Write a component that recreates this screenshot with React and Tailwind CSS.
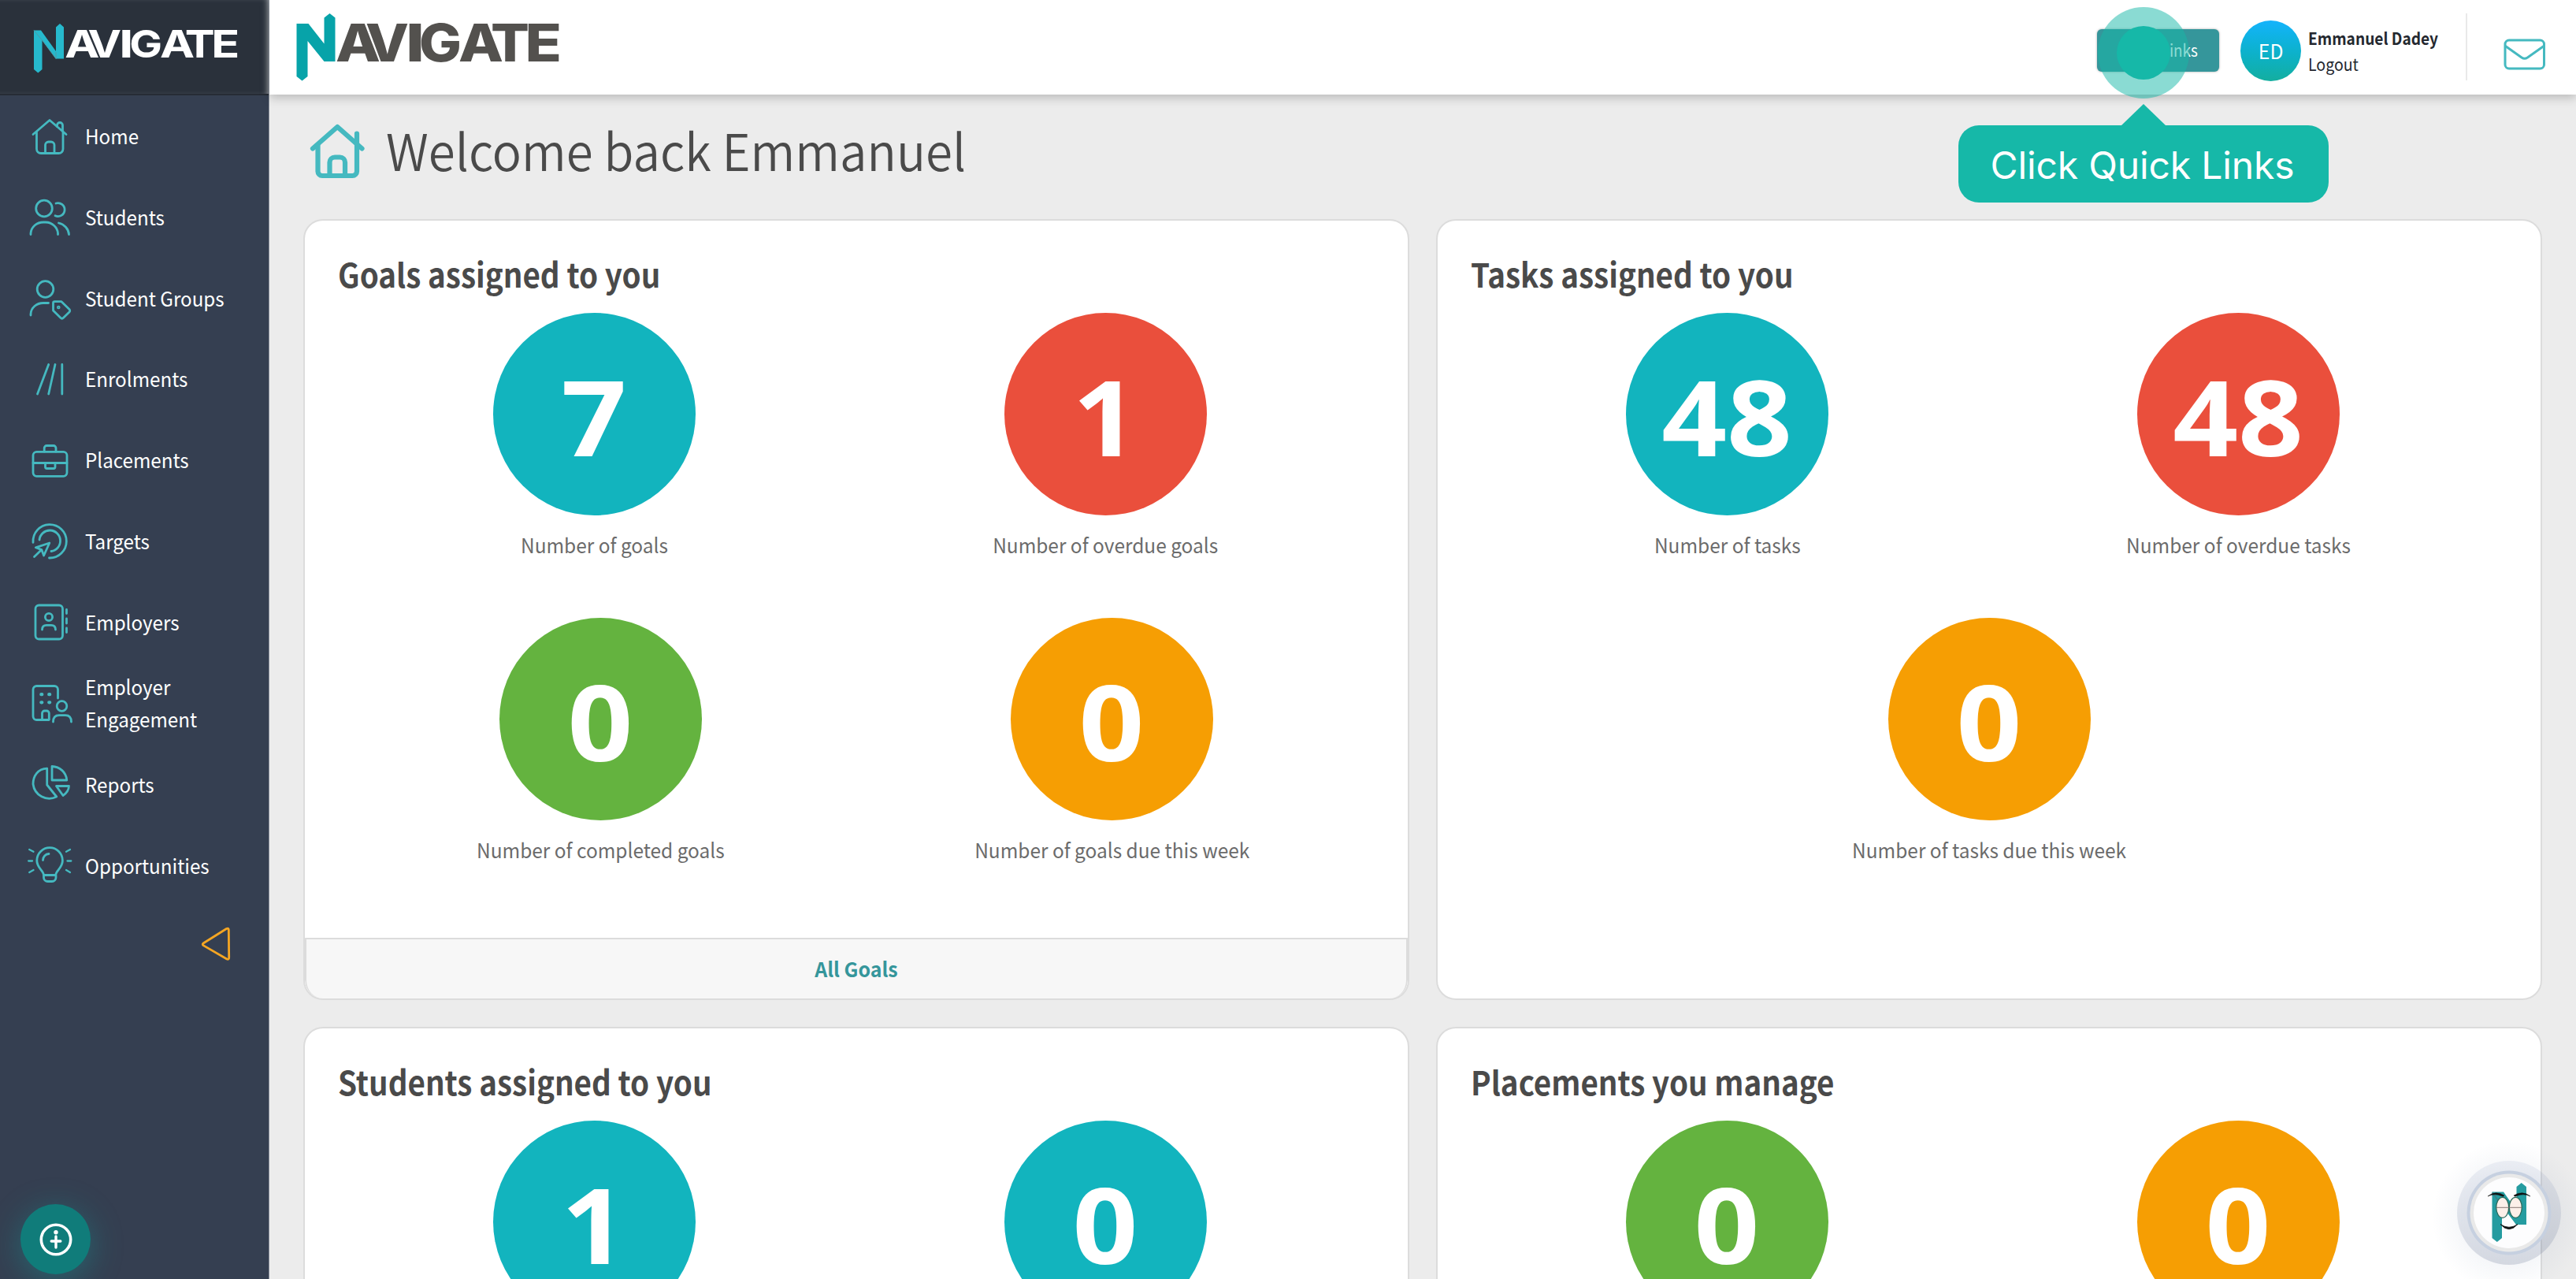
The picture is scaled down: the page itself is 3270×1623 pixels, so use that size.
const TEAL = "#45b9c0";

const iconProps = {
  viewBox: "0 0 60 60",
  fill: "none",
  stroke: TEAL,
  strokeWidth: 2.8,
  strokeLinecap: "round",
  strokeLinejoin: "round",
};

/* Sidebar icons, each drawn on a 60 x 60 grid */
const icons = {
  home: (
    <>
      <path d="M9 26.5 L30 8.5 L51 26.5" />
      <path d="M13.5 23.5 V45 a5.5 5.5 0 0 0 5.5 5.5 H41.5 a5.5 5.5 0 0 0 5.5 -5.5 V23.5" />
      <path d="M24.5 50 V40 a4 4 0 0 1 4 -4 H32 a4 4 0 0 1 4 4 V50" />
      <path d="M39.5 16.5 V15 a3.5 3.5 0 0 1 3.5 -3.5 a3.5 3.5 0 0 1 3.5 3.5 V22" />
    </>
  ),
  students: (
    <>
      <circle cx="23" cy="17.5" r="10.3" />
      <path d="M6 50.5 V49 A16 15 0 0 1 22 35 H25 A16 15 0 0 1 40.5 49 V50.5" />
      <path d="M38 11 A8.5 8.5 0 1 1 37 26.8" />
      <path d="M41.5 36 A17 16 0 0 1 54.5 50.5" />
    </>
  ),
  groups: (
    <>
      <circle cx="24.5" cy="17" r="10.3" />
      <path d="M6 50 V48.5 A16 14.5 0 0 1 22 34.5 H28.5" />
      <path d="M34.5 34.5 a1.8 1.8 0 0 1 1.8 -1.8 H45 L55 42.5 a2.4 2.4 0 0 1 0 3.4 L47.5 53.3 a2.6 2.6 0 0 1 -3.6 0 L34.5 44 Z" />
      <circle cx="41.3" cy="40" r="0.9" />
    </>
  ),
  enrolments: <path d="M28.7 9.5 L14.5 47 M37 9.5 L28.7 47 M45.8 9.5 V47" />,
  placements: (
    <>
      <rect x="9" y="17.3" width="43" height="31" rx="4.5" />
      <path d="M23.2 17 V12.5 a3 3 0 0 1 3 -3 H35 a3 3 0 0 1 3 3 V17 M9 31.5 H52" />
      <path d="M24.5 32 V36.5 a2 2 0 0 0 2 2 H35 a2 2 0 0 0 2 -2 V32" />
    </>
  ),
  targets: (
    <>
      <path d="M9 29.3 A21.2 21.2 0 1 1 29.5 49" />
      <path d="M17 26 A13.3 13.3 0 1 1 32 40.5" />
      <path d="M29.8 30 L12.3 35.8 L19.8 38.6 L22.6 46 Z M19.8 38.6 L10.5 47.5" />
    </>
  ),
  employers: (
    <>
      <rect x="12" y="7" width="34.5" height="43" rx="4.5" />
      <circle cx="29" cy="22" r="4.6" />
      <path d="M20.5 38 C20.5 33.5 23 32.3 26 32.3 H32 C35 32.3 37.5 33.5 37.5 38" />
      <path d="M51.5 12.5 V17.5 M51.5 24 V30 M51.5 36 V41.5" />
    </>
  ),
  engagement: (
    <>
      <path d="M29 49.5 H13.5 a4.5 4.5 0 0 1 -4.5 -4.5 V11 a4.5 4.5 0 0 1 4.5 -4.5 H36 a4.5 4.5 0 0 1 4.5 4.5 V22" />
      <path d="M20.5 49 V41 a3 3 0 0 1 3 -3 H26.3 a3 3 0 0 1 3 3 V49" />
      <path d="M19.3 17.2 h1 M29.2 17.2 h1 M19.3 27.3 h1 M29.2 27.3 h1" strokeWidth="4.2" />
      <circle cx="45.5" cy="32" r="6.3" />
      <path d="M34.5 52 C34.5 46 37.5 43.7 42 43.7 H50 C54.5 43.7 57.5 46 57.5 52" />
    </>
  ),
  reports: (
    <>
      <path d="M26.7 8.2 C15 8.5 9 18 9 28 A20.7 20.7 0 0 0 38.8 44 L26.7 29 Z" />
      <path d="M33 5.5 C43 5.8 51 13 51.8 23 H33 Z" />
      <path d="M38.5 30.5 H54.5 C54.3 35 51.5 39.5 47 42.5 Z" />
    </>
  ),
  opportunities: (
    <>
      <path d="M22.5 40.5 C22 34 13.8 31.5 13.8 22 A16.3 16.3 0 0 1 46.4 22 C46.4 31.5 38.2 34 37.7 40.5 Z" />
      <path d="M22.5 41 V43.5 a5 5 0 0 0 5 5 H33 a5 5 0 0 0 5 -5 V41" />
      <path d="M21.5 21.5 A8 8 0 0 1 29 13.5" />
      <path d="M3.2 22.5 H8 M4.2 8 L9.5 10.8 M4.2 37 L9.5 34 M52.5 22.5 H57.3 M56 8 L51 10.8 M56 37 L51 34" strokeWidth="2.3" />
    </>
  ),
};

const nav = [
  ["home", "Home"],
  ["students", "Students"],
  ["groups", "Student Groups"],
  ["enrolments", "Enrolments"],
  ["placements", "Placements"],
  ["targets", "Targets"],
  ["employers", "Employers"],
  ["engagement", "Employer Engagement"],
  ["reports", "Reports"],
  ["opportunities", "Opportunities"],
];

/* Wordmark letters with hand-set kerning: [letter, x, advance] */
const letters = [
  ["A", 426, 57],
  ["V", 464, 55],
  ["I", 515, 24],
  ["G", 532, 54],
  ["A", 582, 57],
  ["T", 623, 49],
  ["E", 666.5, 46.5],
];

function Wordmark({ color, weight, stroke }) {
  return (
    <g fill={color} stroke={color} strokeWidth={stroke} fontFamily="Inter" fontWeight={weight} fontSize="66">
      {letters.map(([ch, x, w]) => (
        <text key={x} x={x} y="78" textLength={w} lengthAdjust="spacingAndGlyphs">{ch}</text>
      ))}
    </g>
  );
}

function Sidebar() {
  return (
    <aside className="flex h-full w-[342px] shrink-0 flex-col border-r border-[#8a919c] bg-[#353f51]">
      <div className="h-[121px] shrink-0 border-b-2 border-[#262c35] bg-[#2a313b] shadow-[inset_-6px_0_8px_-6px_#c9ccd0]">
        <svg viewBox="0 0 342 120" className="h-[120px] w-[342px]">
          <path d="M43 38.5 H52 L71 65 V34.5 L76 30 L81 34.5 V74.5 H71 L53.5 51 V88 L48.3 92.5 L43 88 Z" fill="#26b9cd" />
          <path d="M43 38.5 L53.5 51 L71 74.5 V66" fill="none" stroke="#4f9aa5" strokeWidth="1" />
          <g transform="translate(-247.5 16.4) scale(0.774 0.732)">
            <Wordmark color="#fff" weight="700" stroke="0" />
          </g>
        </svg>
      </div>
      <nav className="mt-0.5 flex flex-col">
        {nav.map(([icon, label]) => (
          <a key={icon} className="flex h-[102.85px] items-center pl-[32.5px]">
            <svg {...iconProps} className="h-[60px] w-[60px] shrink-0">{icons[icon]}</svg>
            <span className="ml-[15px] w-[205px] origin-left scale-x-[0.93] pr-2 pb-1.5 text-[26px] leading-[41px] text-white">
              {label}
            </span>
          </a>
        ))}
      </nav>
      <svg viewBox="0 0 40 46" className="mt-[24px] ml-[254px] h-[46px] w-[40px]" fill="none" stroke="#f5a623" strokeWidth="2.8" strokeLinejoin="round">
        <path d="M4 22 Q2.5 23.3 4 24.6 L34 42 Q36.7 43 36.7 40 L36.3 5 Q36.3 2.2 33.5 3.5 Z" />
      </svg>
    </aside>
  );
}

function Header() {
  return (
    <header className="relative z-10 flex h-[120px] w-full shrink-0 items-center bg-white pt-2 shadow-[0_4px_12px_rgba(0,0,0,0.22)]">
      <svg viewBox="342 0 400 120" className="-mt-2 h-[120px] w-[400px]">
        <path d="M376.5 30 H391.5 L411.5 55.5 V22.5 L418.5 17 L425.5 22.5 V78 H411.5 L390.5 52 V97 L383.5 102.5 L376.5 97 Z" fill="#07a3a9" />
        <Wordmark color="#53514e" weight="800" stroke="0" />
      </svg>
      <div className="ml-auto flex h-[54px] w-[155px] items-center justify-center rounded-md bg-[#35969b] shadow-[0_0_3px_rgba(0,0,0,0.35)]">
        <span className="origin-center scale-x-[0.9] pb-0.5 text-[21px] leading-none whitespace-nowrap text-white">Quick Links</span>
      </div>
      <div className="ml-[27px] flex h-[77px] w-[77px] items-center justify-center rounded-full bg-gradient-to-b from-[#15b3fc] to-[#14ae9f]">
        <span className="scale-x-[0.95] text-[26px] leading-none text-white">ED</span>
      </div>
      <div className="ml-[9px] w-[200px] text-[#24282f]">
        <div className="origin-left scale-x-[0.91] text-[21px] leading-[34px] font-bold whitespace-nowrap">Emmanuel Dadey</div>
        <div className="origin-left scale-x-[0.93] text-[21px] leading-[32px]">Logout</div>
      </div>
      <div className="mt-[-9px] h-[85px] w-[2px] bg-[#e9e9e9]" />
      <svg viewBox="0 0 54 42" className="mt-[10px] mr-[38px] ml-[46px] h-[42px] w-[54px]" fill="none" stroke={TEAL} strokeWidth="3" strokeLinejoin="round">
        <rect x="2" y="3" width="49.5" height="36" rx="5" />
        <path d="M2.5 10.5 L23 25 Q26.7 27.5 30.5 25 L51 10.5" />
      </svg>
    </header>
  );
}

function Stat({ value, label, color }) {
  return (
    <div className="flex w-[649px] flex-col items-center">
      <div className={`flex h-[257px] w-[257px] items-start justify-center rounded-full ${color}`}>
        <span className="scale-x-[1.09] font-['Open_Sans'] text-[133px] leading-[261px] font-bold text-white">{value}</span>
      </div>
      {label && (
        <div className="mt-[14px] scale-x-[0.94] text-[26px] leading-[46px] whitespace-nowrap text-[#6b6b6b]">{label}</div>
      )}
    </div>
  );
}

const CYAN = "bg-[#12b4be]";
const RED = "bg-[#ea4f3c]";
const GREEN = "bg-[#64b33f]";
const AMBER = "bg-[#f69e03]";

function Card({ title, first, second, footer }) {
  return (
    <section className="flex h-[991px] flex-col overflow-hidden rounded-[25px] border-2 border-[#dcdcdc] bg-white">
      <h2 className="mt-[42px] ml-[42px] origin-left scale-x-[0.918] text-[42px] leading-[50px] font-bold whitespace-nowrap text-[#4a4a4a]">
        {title}
      </h2>
      <div className="mt-[25px] ml-[43px] flex">
        {first.map((s, i) => <Stat key={i} {...s} />)}
      </div>
      {second && (
        <div className="mt-[70px] ml-[51px] flex w-[1298px] justify-center">
          {second.map((s, i) => <Stat key={i} {...s} />)}
        </div>
      )}
      {footer && (
        <div className="mt-auto flex h-[77px] items-center justify-center rounded-b-[23px] border-x-2 border-t-2 border-[#dcdcdc] bg-[#f7f7f7]">
          <span className="scale-x-[0.96] pb-0.5 text-[26px] leading-none font-bold text-[#35969b]">{footer}</span>
        </div>
      )}
    </section>
  );
}

function Mascot() {
  return (
    <svg viewBox="0 0 200 183" className="absolute right-0 bottom-0 z-20 h-[183px] w-[200px]">
      <defs>
        <radialGradient id="haze">
          <stop offset="0.6" stopColor="#3c5a8c" stopOpacity="0.05" />
          <stop offset="1" stopColor="#3c5a8c" stopOpacity="0" />
        </radialGradient>
        <linearGradient id="halo" x1="0" y1="0" x2="0" y2="1">
          <stop offset="0" stopColor="#6a7fae" stopOpacity="0.1" />
          <stop offset="1" stopColor="#3a4a70" stopOpacity="0.18" />
        </linearGradient>
      </defs>
      <circle cx="115" cy="105" r="98" fill="url(#haze)" />
      <circle cx="115" cy="99" r="66" fill="url(#halo)" />
      <circle cx="115" cy="99" r="53.5" fill="#c6d0e0" />
      <circle cx="115" cy="99" r="49.5" fill="#e9e9e9" />
      <circle cx="115" cy="99" r="45" fill="#fdfdfe" />
      <path d="M93.5 72.5 H108 L124.5 96 V66 L130.7 61 L137 66 V114 H124 L106 90 V131 L99.8 136 L93.5 131 Z" fill="#259ca0" />
      <path d="M94 73 L104 88" stroke="#3f7f85" strokeWidth="1.5" />
      <ellipse cx="106.7" cy="92.3" rx="8" ry="13" fill="#fcefe9" stroke="#2a6a5c" strokeWidth="1.3" />
      <ellipse cx="123.3" cy="92.3" rx="8" ry="13" fill="#fcefe9" stroke="#2a6a5c" strokeWidth="1.3" />
      <path d="M99 92.3 H131" stroke="#7a6a68" strokeWidth="0.9" />
      <path d="M88 78 Q98 70 109 77 Q108 79 105 77.5 Q97 74 88 78 Z M142 78 Q132 70 121 77 Q122 79 125 77.5 Q133 74 142 78 Z" fill="#111" stroke="#111" strokeWidth="0.5" />
      <path d="M104 113.5 Q115 126 126 113.5 Q115 121 104 113.5 Z" fill="#111" stroke="#111" strokeWidth="0.8" />
    </svg>
  );
}

export default function App() {
  return (
    <div className="relative flex h-[1623px] w-[3270px] overflow-hidden bg-[#ececec] font-['Noto_Sans_CJK_SC','Noto_Sans',sans-serif]">
      <Sidebar />
      <div className="flex w-[2928px] flex-col">
        <Header />
        <main className="flex flex-col pl-[43px]">
          <div className="flex h-[158px] items-center">
            <svg viewBox="0 0 78 78" className="mt-[-16px] ml-[4px] h-[78px] w-[78px]" fill="none" stroke={TEAL} strokeWidth="6.2" strokeLinecap="round" strokeLinejoin="round">
              <path d="M8 36.5 L39.3 9 L70.5 36.5" />
              <path d="M14.5 32 V65.5 a5.5 5.5 0 0 0 5.5 5.5 H58.5 a5.5 5.5 0 0 0 5.5 -5.5 V17.5" />
              <path d="M29.5 71 V54 a6.5 6.5 0 0 1 6.5 -6.5 H42.5 a6.5 6.5 0 0 1 6.5 6.5 V71" />
            </svg>
            <h1 className="mt-[-20px] ml-[23px] origin-left scale-x-[0.965] text-[64px] leading-[80px] font-[350] whitespace-nowrap text-[#4a4a4a]">
              Welcome back Emmanuel
            </h1>
          </div>
          <div className="grid w-[2842px] grid-cols-2 gap-x-[34px] gap-y-[34px]">
            <Card
              title="Goals assigned to you"
              first={[
                { value: 7, label: "Number of goals", color: CYAN },
                { value: 1, label: "Number of overdue goals", color: RED },
              ]}
              second={[
                { value: 0, label: "Number of completed goals", color: GREEN },
                { value: 0, label: "Number of goals due this week", color: AMBER },
              ]}
              footer="All Goals"
            />
            <Card
              title="Tasks assigned to you"
              first={[
                { value: 48, label: "Number of tasks", color: CYAN },
                { value: 48, label: "Number of overdue tasks", color: RED },
              ]}
              second={[{ value: 0, label: "Number of tasks due this week", color: AMBER }]}
            />
            <Card
              title="Students assigned to you"
              first={[
                { value: 1, color: CYAN },
                { value: 0, color: CYAN },
              ]}
            />
            <Card
              title="Placements you manage"
              first={[
                { value: 0, color: GREEN },
                { value: 0, color: AMBER },
              ]}
            />
          </div>
        </main>
      </div>

      {/* Guided tour marker and callout */}
      <div className="absolute top-[9px] left-[2663px] z-20 flex h-[116px] w-[116px] items-center justify-center rounded-full bg-[#16b8a8]/50">
        <div className="h-[68px] w-[68px] rounded-full bg-[#16b8a8]" />
      </div>
      <div className="absolute top-[132px] left-[2486px] z-20 flex w-[470px] flex-col items-center">
        <div className="h-[27px] w-[56px] bg-[#16b8a8] [clip-path:polygon(50%_0,100%_100%,0_100%)]" />
        <div className="flex h-[98px] w-full items-center justify-center rounded-[26px] bg-[#16b8a8] pt-1 pr-[3px] font-[Inter] text-[48px] leading-none tracking-[-0.15px] whitespace-nowrap text-white">
          Click Quick Links
        </div>
      </div>

      {/* Accessibility button */}
      <div className="absolute bottom-[6px] left-[26px] z-20 flex h-[89px] w-[89px] items-center justify-center rounded-full bg-[#107c7a] shadow-[0_8px_40px_rgba(20,150,150,0.45)]">
        <svg viewBox="0 0 42 42" className="h-[42px] w-[42px]" fill="none" stroke="#fff" strokeLinecap="round">
          <circle cx="21" cy="21" r="18.7" strokeWidth="3.6" />
          <circle cx="21" cy="11.8" r="2.7" fill="#fff" stroke="none" />
          <path d="M21 17 V31 M15.2 23 H26.8" strokeWidth="3.4" />
        </svg>
      </div>

      <Mascot />
    </div>
  );
}
